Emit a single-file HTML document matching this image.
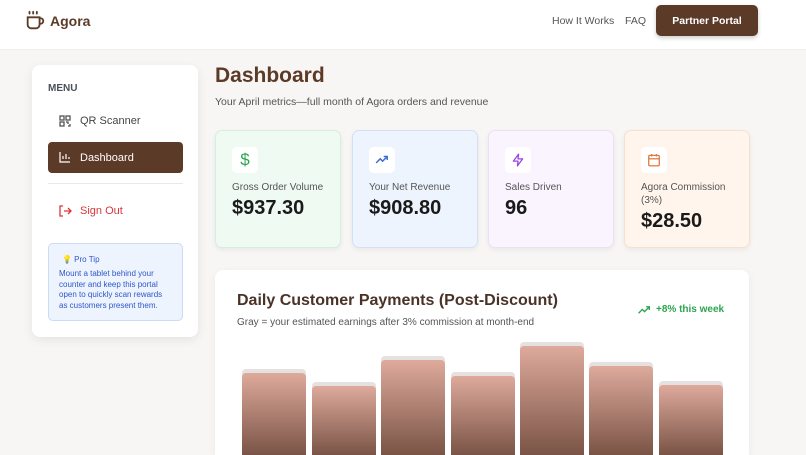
<!DOCTYPE html>
<html><head><meta charset="utf-8"><style>
*{box-sizing:border-box;margin:0;padding:0}
html,body{width:806px;height:455px;overflow:hidden}
body{background:#f8f6f4;font-family:"Liberation Sans",sans-serif;position:relative}
.hdr{position:absolute;left:0;top:0;width:806px;height:50px;background:#fff;border-bottom:1px solid #eee}
.abs{position:absolute}
.side{left:32px;top:65px;width:166px;height:272px;background:#fff;border-radius:8px;box-shadow:0 3px 10px rgba(0,0,0,.08)}
.card{top:130px;width:126px;height:118px;border-radius:7px;border:1px solid;box-shadow:0 2px 5px rgba(0,0,0,.06)}
.ic{position:absolute;left:16px;top:16px;width:26px;height:26px;background:#fff;border-radius:5px;display:flex;align-items:center;justify-content:center}
.lbl{position:absolute;left:16px;top:50px;font-size:10px;color:#555;line-height:13px}
.val{position:absolute;left:16px;top:66px;font-size:20px;font-weight:bold;color:#1a1a1a}
.bar{position:absolute;width:64px;bottom:0;border-radius:4px 4px 0 0;background:#e6e1e1}
.bar i{position:absolute;left:0;right:0;top:4px;bottom:0;border-radius:4px 4px 0 0;background:linear-gradient(#deaa9c,#7a5446)}
</style></head><body>
<div class="hdr">
<svg class="abs" style="left:24px;top:10px" width="22" height="22" viewBox="0 0 24 24" fill="none" stroke="#5c3a28" stroke-width="2" stroke-linecap="round"><path d="M6 2v2M10 2v2M14 2v2M4 8h13v8a4 4 0 0 1-4 4H8a4 4 0 0 1-4-4z M17 9h1a3 3 0 0 1 0 6h-1"/></svg>
<div class="abs" style="left:50px;top:13px;font-size:14px;font-weight:bold;color:#5c3a28">Agora</div>
<div class="abs" style="left:552px;top:15px;font-size:10.5px;color:#555">How It Works</div>
<div class="abs" style="left:625px;top:15px;font-size:10.5px;color:#555">FAQ</div>
<div class="abs" style="left:656px;top:5px;width:102px;height:31px;background:#5c3a28;border-radius:5px;color:#fff;font-size:10.5px;font-weight:bold;text-align:center;line-height:32px;box-shadow:0 2px 4px rgba(0,0,0,.2)">Partner Portal</div>
</div>
<div class="abs side">
<div class="abs" style="left:16px;top:18px;font-size:10px;font-weight:bold;color:#4a4f5a">MENU</div>
<svg class="abs" style="left:27px;top:50px" width="12" height="12" viewBox="0 0 12 12" fill="none" stroke="#555" stroke-width="1.3"><rect x="1" y="1" width="4" height="4"/><rect x="7" y="1" width="4" height="4"/><rect x="1" y="7" width="4" height="4"/><path d="M7 7h2v2M11 9v2h-2"/></svg>
<div class="abs" style="left:48px;top:50px;font-size:11px;color:#444">QR Scanner</div>
<div class="abs" style="left:16px;top:77px;width:135px;height:31px;background:#5c3a28;border-radius:4px"></div>
<svg class="abs" style="left:27px;top:86px" width="12" height="12" viewBox="0 0 12 12" fill="none" stroke="#fff" stroke-width="1.2"><path d="M1 1v10h10M4 8V5M7 8V3M10 8V6"/></svg>
<div class="abs" style="left:48px;top:87px;font-size:11px;color:#fff">Dashboard</div>
<div class="abs" style="left:16px;top:118px;width:135px;height:1px;background:#e8e8e8"></div>
<svg class="abs" style="left:27px;top:140px" width="13" height="12" viewBox="0 0 13 12" fill="none" stroke="#d9363e" stroke-width="1.3"><path d="M4 1H1v10h3M5 6h7M9 3l3 3-3 3"/></svg>
<div class="abs" style="left:48px;top:140px;font-size:11px;color:#d9363e">Sign Out</div>
<div class="abs" style="left:16px;top:178px;width:135px;height:78px;background:#eef4fe;border:1px solid #c9dbf7;border-radius:5px;padding:11px 10px;color:#2f56c9;font-size:8px;line-height:10.8px">
<div style="margin-left:3px;margin-bottom:3px">💡 Pro Tip</div>Mount a tablet behind your counter and keep this portal open to quickly scan rewards as customers present them.</div>
</div>
<div class="abs" style="left:215px;top:64px;font-size:21px;font-weight:bold;color:#5c3a28">Dashboard</div>
<div class="abs" style="left:215px;top:96px;font-size:10.5px;color:#555">Your April metrics—full month of Agora orders and revenue</div>
<div class="abs card" style="left:215px;background:#effbf2;border-color:#d4f0dc"><div class="ic" style="color:#2ea44f;font-size:17px">$</div><div class="lbl">Gross Order Volume</div><div class="val">$937.30</div></div>
<div class="abs card" style="left:352px;background:#eef4fe;border-color:#d2e0f7"><div class="ic"><svg width="14" height="14" viewBox="0 0 24 24" fill="none" stroke="#3b6fd4" stroke-width="2.5"><path d="M2 17l7-7 4 4 8-8M15 6h6v6"/></svg></div><div class="lbl">Your Net Revenue</div><div class="val">$908.80</div></div>
<div class="abs card" style="left:488px;background:#f9f4fe;border-color:#ebdff8"><div class="ic"><svg width="14" height="14" viewBox="0 0 24 24" fill="none" stroke="#9b45e0" stroke-width="2.2" stroke-linejoin="round"><path d="M13 2L4 14h8l-1 8 9-12h-8z"/></svg></div><div class="lbl">Sales Driven</div><div class="val">96</div></div>
<div class="abs card" style="left:624px;background:#fff5ec;border-color:#f6e0cc"><div class="ic"><svg width="14" height="14" viewBox="0 0 24 24" fill="none" stroke="#e06a2c" stroke-width="2"><rect x="3" y="4" width="18" height="18" rx="2"/><path d="M3 10h18M8 2v4M16 2v4"/></svg></div><div class="lbl">Agora Commission<br>(3%)</div><div class="val" style="top:79px">$28.50</div></div>
<div class="abs" style="left:215px;top:270px;width:534px;height:185px;background:#fff;border-radius:8px 8px 0 0;box-shadow:0 2px 8px rgba(0,0,0,.06);overflow:hidden">
<div class="abs" style="left:22px;top:22px;font-size:16px;font-weight:bold;color:#4a3226">Daily Customer Payments (Post-Discount)</div>
<div class="abs" style="left:22px;top:47px;font-size:10px;color:#555">Gray = your estimated earnings after 3% commission at month-end</div>
<svg class="abs" style="left:423px;top:35px" width="13" height="10" viewBox="0 0 24 16" fill="none" stroke="#2ea44f" stroke-width="2.5"><path d="M1 14l7-7 4 4 9-9M15 2h6v6"/></svg>
<div class="abs" style="left:441px;top:34px;font-size:10px;font-weight:bold;color:#2ea44f">+8% this week</div>
<div class="bar" style="left:27px;top:99px"><i></i></div>
<div class="bar" style="left:97px;top:112px"><i></i></div>
<div class="bar" style="left:166px;top:86px"><i></i></div>
<div class="bar" style="left:236px;top:102px"><i></i></div>
<div class="bar" style="left:305px;top:72px"><i></i></div>
<div class="bar" style="left:374px;top:92px"><i></i></div>
<div class="bar" style="left:444px;top:111px"><i></i></div>
</div>
</body></html>
